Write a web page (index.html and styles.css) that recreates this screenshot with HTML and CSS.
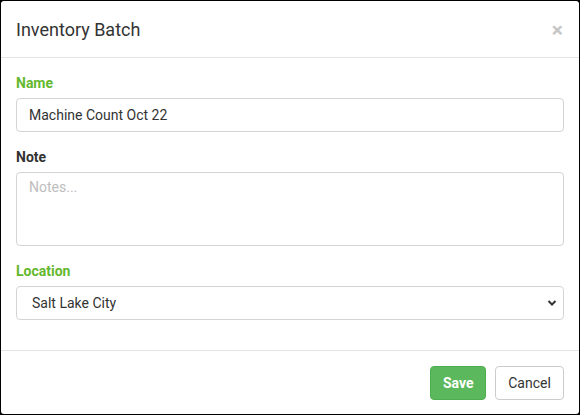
FILE: index.html
```html
<!DOCTYPE html>
<html lang="en">
<head>
  <meta charset="UTF-8">
  <title>Inventory Batch</title>
  <link rel="stylesheet" href="styles.css">
</head>
<body>

<div class="modal">
  <div class="modal-header">
    <h4>Inventory Batch</h4>
    <span class="close">&times;</span>
  </div>

  <div class="modal-body">
    <label class="ok">Name</label>
    <input type="text" value="Machine Count Oct 22">

    <label>Note</label>
    <textarea placeholder="Notes..."></textarea>

    <label class="ok">Location</label>
    <div class="select-wrap">
      <select>
        <option>Salt Lake City</option>
      </select>
      <svg class="caret" width="10" height="8" viewBox="0 0 10 8">
        <path d="M1.5 2 L5 5.5 L8.5 2" fill="none" stroke="#333" stroke-width="2"/>
      </svg>
    </div>
  </div>

  <div class="modal-footer">
    <button class="btn btn-save">Save</button>
    <button class="btn btn-cancel">Cancel</button>
  </div>
</div>

</body>
</html>
```

FILE: styles.css
```css
* {
  box-sizing: border-box;
  font-family: Roboto, 'Liberation Sans', sans-serif;
}

body {
  margin: 0;
  padding: 1px;
  background: #000;
  height: 415px;
  color: #333;
}

.modal {
  background: #fff;
  border-radius: 3px;
  height: 413px;
  display: flex;
  flex-direction: column;
}

.modal-header {
  height: 57px;
  border-bottom: 1px solid #e5e5e5;
  padding: 0 16px 0 15px;
  display: flex;
  align-items: center;
  justify-content: space-between;
}

.modal-header h4 {
  margin: 0;
  font-size: 18px;
  font-weight: 400;
  color: #333;
}

.close {
  font-size: 21px;
  color: #c6c6c6;
  font-weight: 700;
  line-height: 1;
  margin-top: 2px;
}

.modal-body {
  padding: 15px 15px 30px 15px;
  flex: 1;
}

label {
  display: block;
  font-size: 14px;
  font-weight: 700;
  color: #333;
  padding-top: 2px;
  margin-bottom: 6px;
  line-height: 17px;
}

label.ok {
  color: #64b82e;
}

input, textarea, select {
  display: block;
  width: 100%;
  border: 1px solid #d4d4d4;
  border-radius: 4px;
  font-size: 14px;
  color: #333;
  padding: 6px 12px;
  background: #fff;
  margin-bottom: 15px;
  outline: none;
}

input, select {
  height: 34px;
}

textarea {
  height: 74px;
  resize: none;
}

textarea::placeholder {
  color: #bdbdbd;
}

.select-wrap {
  position: relative;
}

select {
  appearance: none;
  -webkit-appearance: none;
  padding-left: 15px;
  margin-bottom: 0;
}

.caret {
  position: absolute;
  right: 7px;
  top: 13px;
}

.modal-footer {
  border-top: 1px solid #e5e5e5;
  padding: 15px 15px 14px;
  display: flex;
  justify-content: flex-end;
  gap: 9px;
}

.btn {
  height: 34px;
  font-size: 14px;
  border-radius: 4px;
  padding: 0 12px;
  cursor: pointer;
}

.btn-save {
  background: #5cb85c;
  border: 1px solid #4cae4c;
  color: #fff;
  font-weight: 700;
  width: 56px;
}

.btn-cancel {
  background: #fff;
  border: 1px solid #ccc;
  color: #333;
  width: 69px;
}
```
